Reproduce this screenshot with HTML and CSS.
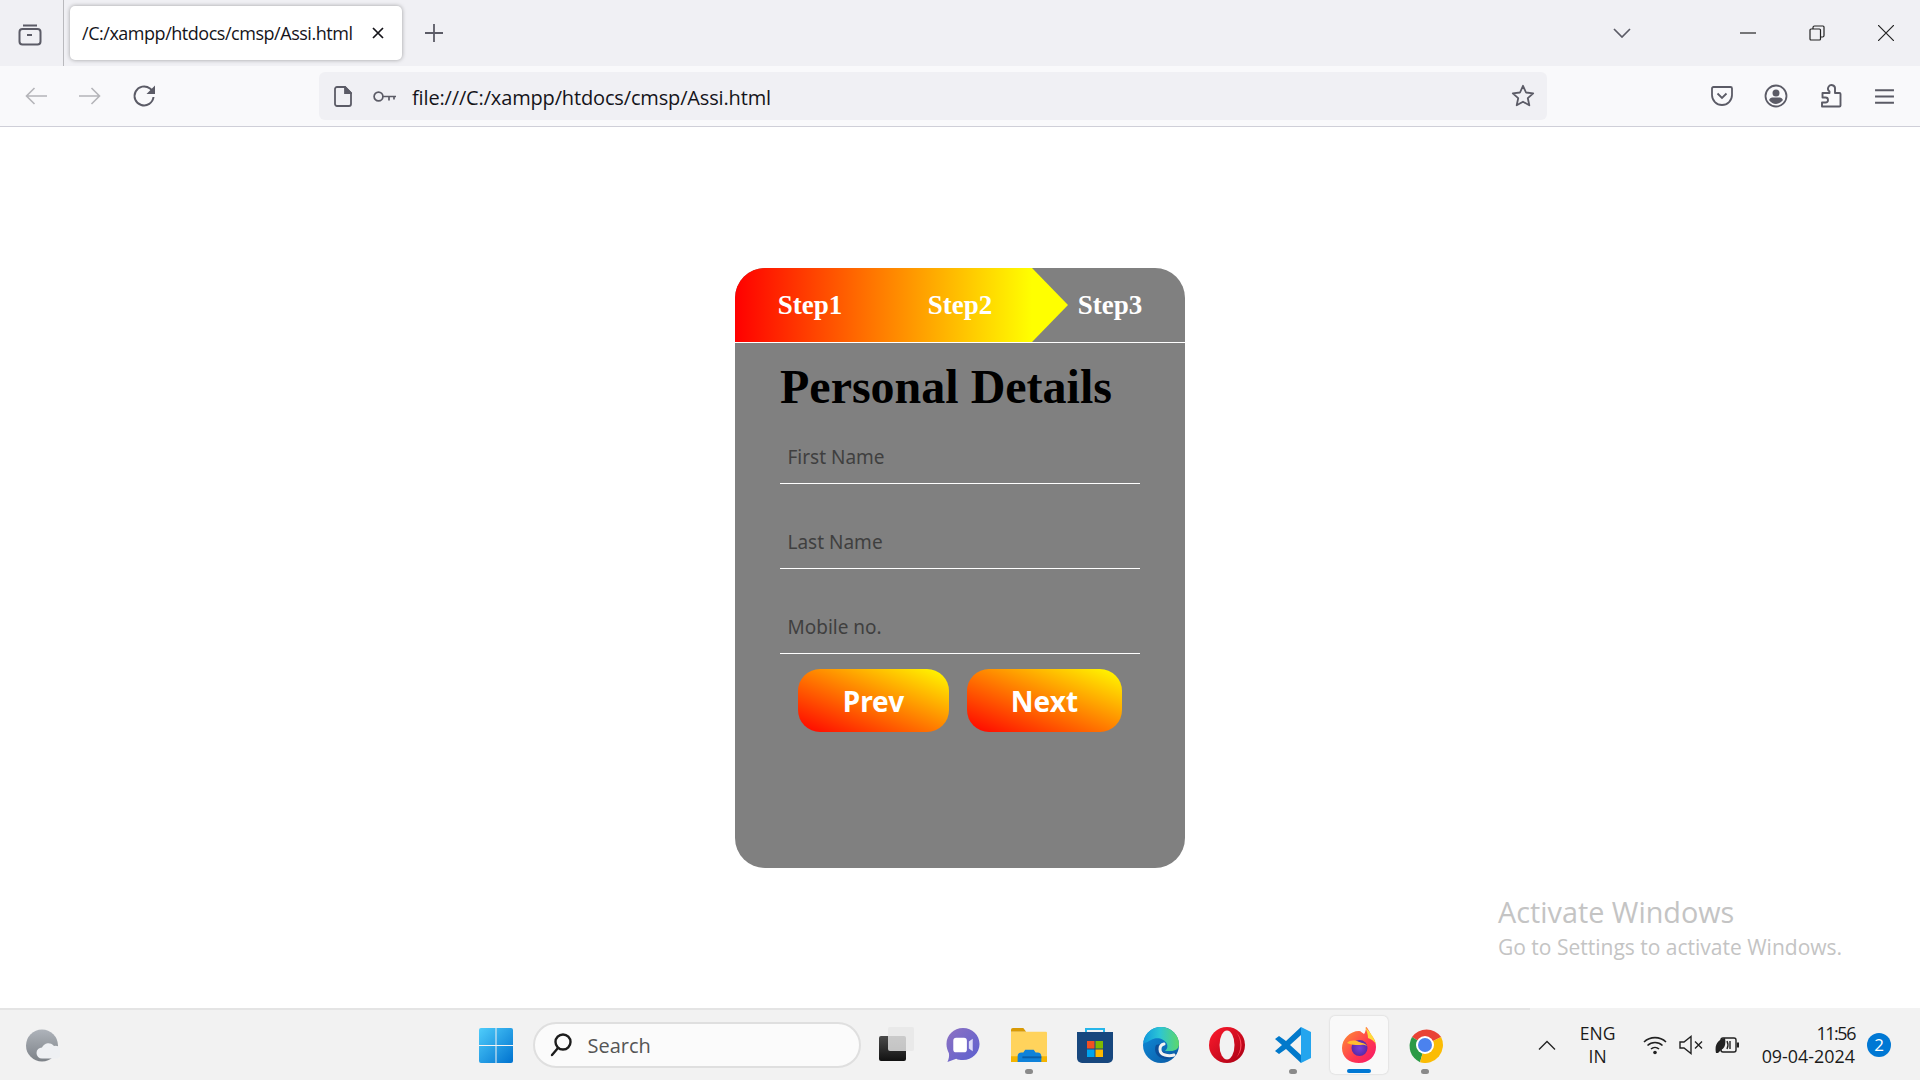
FILE: index.html
```html
<!DOCTYPE html>
<html lang="en">
<head>
<meta charset="utf-8">
<title>Assi.html</title>
<link rel="stylesheet" href="styles.css">
</head>
<body>
<header class="tabbar">
  <div class="tabbar-start">
    <svg class="ico24" viewBox="0 0 24 24" fill="none" stroke="#5b5b66" stroke-width="2"><path d="M5 3.500h14"/><rect x="1.500" y="7" width="21" height="15.500" rx="3"/><path d="M9 13h5"/></svg>
  </div>
  <div class="tab">
    <span class="tab-title">/C:/xampp/htdocs/cmsp/Assi.html</span>
    <svg class="ico14" viewBox="0 0 14 14" stroke="#15141a" stroke-width="1.700"><path d="M2 2l10 10M12 2L2 12"/></svg>
  </div>
  <svg class="newtab" viewBox="0 0 18 18" stroke="#5b5b66" stroke-width="1.800"><path d="M9 0v18M0 9h18"/></svg>
  <div class="tabbar-spacer"></div>
  <svg class="chev" viewBox="0 0 18 10" fill="none" stroke="#5b5b66" stroke-width="1.700"><path d="M1 1l8 8 8-8"/></svg>
  <div class="winctl">
    <svg class="winbtn" viewBox="0 0 16 16" stroke="#222" stroke-width="1.200"><path d="M0 8h16"/></svg>
    <svg class="winbtn" viewBox="0 0 16 16" fill="none" stroke="#222" stroke-width="1.200"><rect x="1" y="4" width="10.500" height="11" rx="1"/><path d="M4 4V2.500Q4 1 5.500 1H14q1 0 1 1v8.500q0 1.500-1.500 1.500h-2"/></svg>
    <svg class="winbtn" viewBox="0 0 16 16" stroke="#222" stroke-width="1.200"><path d="M0 0l16 16M16 0L0 16"/></svg>
  </div>
</header>

<nav class="toolbar">
  <div class="navbtns">
    <svg class="ico22" viewBox="0 0 22 18" fill="none" stroke="#b4b4b9" stroke-width="1.600"><path d="M22 9H1.500M9.500 1L1.500 9l8 8"/></svg>
    <svg class="ico22" viewBox="0 0 22 18" fill="none" stroke="#b4b4b9" stroke-width="1.600"><path d="M0 9h20.500M12.500 1l8 8-8 8"/></svg>
    <svg class="reload" viewBox="0 0 24 24" fill="none" stroke="#5b5b66" stroke-width="2"><path d="M21.500 13a9.500 9.500 0 1 1-3.500-8.500L22 8"/><path d="M23 1.500v8.500h-8.500z" fill="#5b5b66" stroke="none"/></svg>
  </div>
  <div class="urlbar">
    <svg class="doc" viewBox="0 0 18 21" fill="none" stroke="#5b5b66" stroke-width="1.800"><path d="M3 1h8l6 6v11a2 2 0 0 1-2 2H3a2 2 0 0 1-2-2V3a2 2 0 0 1 2-2z"/><path d="M11 1v6h6z" fill="#5b5b66"/></svg>
    <svg class="key" viewBox="0 0 24 11" fill="none" stroke="#5b5b66" stroke-width="1.700"><circle cx="5.500" cy="5.500" r="4.400"/><path d="M10 5.500h13M16 5.500v4M21 5.500v3"/></svg>
    <span class="url">file:///C:/xampp/htdocs/cmsp/Assi.html</span>
    <svg class="star" viewBox="0 0 24 24" fill="none" stroke="#5b5b66" stroke-width="1.800" stroke-linejoin="round"><path d="M12 1.800l3 6.700 7.200.8-5.400 4.900 1.500 7.100-6.300-3.600-6.300 3.600 1.500-7.100L1.800 9.300 9 8.500z"/></svg>
  </div>
  <div class="toolicons">
    <svg class="ico22" viewBox="0 0 22 20" fill="none" stroke="#5b5b66" stroke-width="1.800"><path d="M2.500 1h17A1.500 1.500 0 0 1 21 2.500V9a10 10 0 0 1-20 0V2.500A1.500 1.500 0 0 1 2.500 1z"/><path d="M6.500 7.500l4.500 4.500 4.500-4.500"/></svg>
    <svg class="big" viewBox="0 0 24 24" fill="none" stroke="#5b5b66" stroke-width="1.800"><circle cx="12" cy="12" r="10.500"/><circle cx="12" cy="9" r="3.500" fill="#5b5b66" stroke="none"/><path d="M5 16q1-2.500 3-2.500h8q2 0 3 2.500q-3 4-7 4t-7-4z" fill="#5b5b66" stroke="none"/></svg>
    <svg class="big" viewBox="0 0 24 24" fill="none" stroke="#5b5b66" stroke-width="1.900" stroke-linejoin="round"><path d="M3 22.500h17.500a1 1 0 0 0 1-1V10a1 1 0 0 0-1-1H16V5a3.500 3.500 0 1 0-5.500 2.500V9H3.500v4.500h3a2.500 2.500 0 1 1 0 5h-3.500z"/></svg>
    <svg class="menu" viewBox="0 0 20 16" stroke="#5b5b66" stroke-width="1.800"><path d="M1 2h18M1 8h18M1 14h18"/></svg>
  </div>
</nav>

<main class="page">
  <section class="card">
    <div class="steps">
      <div class="step-progress"></div>
      <span class="step">Step1</span>
      <span class="step">Step2</span>
      <span class="step">Step3</span>
    </div>
    <form class="form">
      <h1 class="title">Personal Details</h1>
      <input class="field" type="text" placeholder="First Name">
      <input class="field" type="text" placeholder="Last Name">
      <input class="field" type="text" placeholder="Mobile no.">
      <div class="actions">
        <button class="btn btn-prev" type="button">Prev</button>
        <button class="btn btn-next" type="button">Next</button>
      </div>
    </form>
  </section>
  <aside class="watermark">
    <div class="wm-big">Activate Windows</div>
    <div class="wm-small">Go to Settings to activate Windows.</div>
  </aside>
</main>

<footer class="taskbar">
  <div class="task-edge"></div>
  <div class="task-row">
    <div class="task-left">
      <svg class="ico34" viewBox="0 0 34 34"><defs><linearGradient id="moon" x1="0" y1="0" x2="0" y2="1"><stop offset="0" stop-color="#aeb3ba"/><stop offset="1" stop-color="#7d8288"/></linearGradient></defs><ellipse cx="16" cy="17" rx="16" ry="16" fill="url(#moon)"/><path d="M16 30a5.500 5.500 0 0 1 0-11 7 7 0 0 1 12-1.500 6 6 0 0 1 3 12.500z" fill="#eef0f3"/></svg>
    </div>
    <div class="task-center">
      <div class="slot slot-start">
        <svg class="ico34" viewBox="0 0 34 35"><defs><linearGradient id="win" x1="0" y1="0" x2="1" y2="1"><stop offset="0" stop-color="#4fcdfb"/><stop offset="1" stop-color="#0072cf"/></linearGradient></defs><path fill="url(#win)" d="M0 2a2 2 0 0 1 2-2h14.500v17H0zM17.500 0H32a2 2 0 0 1 2 2v15H17.500zM0 18h16.500v17H2a2 2 0 0 1-2-2zM17.500 18H34v15a2 2 0 0 1-2 2H17.500z"/></svg>
      </div>
      <div class="search">
        <svg class="search-ico" viewBox="0 0 22 24" fill="none" stroke="#1c1c1c" stroke-width="2.400"><circle cx="13" cy="9" r="7.500"/><path d="M8 15l-6 7" stroke-linecap="round"/></svg>
        <span class="search-text">Search</span>
      </div>
      <div class="slot slot-task">
        <svg class="ico36" viewBox="0 0 36 36"><defs><linearGradient id="tv" x1="0" y1="0" x2="0" y2="1"><stop offset="0" stop-color="#4a4a4a"/><stop offset="1" stop-color="#111"/></linearGradient></defs><rect x="0" y="9" width="27" height="25" rx="2" fill="url(#tv)"/><rect x="9" y="0" width="26" height="24" rx="2" fill="#e6e6e6" fill-opacity=".82"/></svg>
      </div>
      <div class="slot">
        <svg class="ico34" viewBox="0 0 34 36"><defs><linearGradient id="chat" x1="0" y1="0" x2="1" y2="1"><stop offset="0" stop-color="#8e72c2"/><stop offset="1" stop-color="#5a5fd0"/></linearGradient></defs><path fill="url(#chat)" d="M17 0c9.500 0 17 7.500 17 16.500S26.500 33 17 33c-3 0-5-.5-7-1.500L1 35c1.500-3 2-6 1.500-9C1 23 0 20 0 16.500 0 7.500 7.500 0 17 0z"/><rect x="7" y="10" width="14" height="15" rx="3" fill="#fff"/><path d="M23 14l4-3v13l-4-3z" fill="#dcdcf7"/></svg>
      </div>
      <div class="slot dot">
        <svg class="ico36" viewBox="0 0 38 36"><path d="M0 2a2 2 0 0 1 2-2h11l3 4h-16z" fill="#d99a05"/><path d="M0 4h37a1 1 0 0 1 1 1v31H0z" fill="#ffd35c"/><path d="M38 30v6H0v-6z" fill="#f4b400"/><path d="M7 36V30a4 4 0 0 1 4-4h2l2-3h9l2 3h2a4 4 0 0 1 4 4v6z" fill="#0f82da"/><rect x="12" y="30" width="20" height="2" fill="#0a5ea8"/></svg>
      </div>
      <div class="slot">
        <svg class="ico36" viewBox="0 0 36 36"><path d="M9 7V2h18v5" fill="none" stroke="#27b6ea" stroke-width="2"/><path d="M0 5h36v26a5 5 0 0 1-5 5H5a5 5 0 0 1-5-5z" fill="#17477e"/><rect x="10" y="14" width="7.500" height="7.500" fill="#f25022"/><rect x="18.500" y="14" width="7.500" height="7.500" fill="#7fba00"/><rect x="10" y="22.500" width="7.500" height="7.500" fill="#00a4ef"/><rect x="18.500" y="22.500" width="7.500" height="7.500" fill="#ffb900"/></svg>
      </div>
      <div class="slot">
        <svg class="ico36" viewBox="0 0 36 36"><defs><linearGradient id="edgeA" x1="0" y1="0" x2="1" y2="0"><stop offset="0" stop-color="#1099dd"/><stop offset=".45" stop-color="#2cc5d5"/><stop offset="1" stop-color="#5dd76a"/></linearGradient><linearGradient id="edgeB" x1="0" y1="0" x2="1" y2="1"><stop offset="0" stop-color="#0f8fdc"/><stop offset="1" stop-color="#0a57a2"/></linearGradient></defs><circle cx="18" cy="18" r="18" fill="url(#edgeB)"/><path d="M.5 15C2 6 9 0 18 0c10 0 18 8 18 17 0 5-4 7-8 7h-6c2-2 3-4 2-7-3-6-11-7-16-4-4 2-6 4-7.500 2z" fill="url(#edgeA)"/><path d="M13 18c-3 6 1 13 9 14 4 1 9-2 12-6-4 2-8 2-11 0-5-2-8-5-6-9z" fill="#0c4f9a"/><path d="M21 17c-5 1-6 9 1 11 3 1 6 1 9 0" fill="none" stroke="#f2f2f2" stroke-width="3" stroke-linecap="round"/></svg>
      </div>
      <div class="slot">
        <svg class="ico36" viewBox="0 0 36 36"><defs><linearGradient id="op" x1="0" y1="0" x2="1" y2="1"><stop offset="0" stop-color="#ff1b2d"/><stop offset="1" stop-color="#a70014"/></linearGradient></defs><ellipse cx="18" cy="18" rx="18" ry="18" fill="url(#op)"/><ellipse cx="18" cy="18" rx="7.500" ry="14.500" fill="#f2f2f2"/><path d="M27 5a18 18 0 0 1 0 26 14 18 0 0 0 0-26z" fill="#ff4b5b"/></svg>
      </div>
      <div class="slot dot">
        <svg class="ico36" viewBox="0 0 36 36"><path d="M26 0l10 5v26l-10 5z" fill="#24a5ee"/><path d="M26 0L11 14 4 9 0 12l7 6-7 6 4 3 7-5 15 14v-8L15 18 26 8z" fill="#0179cb"/></svg>
      </div>
      <div class="slot slot-active">
        <svg class="ico36" viewBox="0 0 36 36"><defs><linearGradient id="ff" x1="0" y1="0" x2="1" y2="1"><stop offset="0" stop-color="#ff9a2f"/><stop offset=".6" stop-color="#ff3750"/><stop offset="1" stop-color="#f5156c"/></linearGradient><radialGradient id="ffg"><stop offset="0" stop-color="#7a3fd6"/><stop offset="1" stop-color="#5a2aa8"/></radialGradient></defs><path d="M18 4C9 4 1 12 1 21s7 15 17 15 17-7 17-16c0-5-2-9-5-12-1-3-4-8-5-8 0 3-1 6-2 7-2-1-3-3-5-3z" fill="url(#ff)"/><path d="M24 0c3 3 9 9 11 17-2-3-5-5-8-6 0-3-1-7-3-11z" fill="#ffd93b"/><circle cx="18.500" cy="21" r="8" fill="url(#ffg)"/><path d="M6 16c3-3 8-3 12-1 3 1 6 1 8 4-3-2-6-1-9-1-3 0-6 0-11-2z" fill="#ffbd2f"/></svg>
        <span class="active-bar"></span>
      </div>
      <div class="slot dot">
        <svg class="ico36" viewBox="0 0 36 36"><path d="M18 18L5 10A18 18 0 0 1 34.100 10z" fill="#e94235"/><path d="M18 18L5 10a18 18 0 0 0 8 25.300z" fill="#2b9a46"/><path d="M18 18l16.100-8A18 18 0 0 1 13 35.300z" fill="#fbbc05"/><circle cx="18" cy="18" r="9" fill="#fff"/><circle cx="18" cy="18" r="7" fill="#4b82ee"/></svg>
      </div>
    </div>
    <div class="task-right">
      <svg class="tray-chev" viewBox="0 0 18 10" fill="none" stroke="#222" stroke-width="1.300"><path d="M1 9.500l8-8 8 8"/></svg>
      <div class="lang"><span>ENG</span><span>IN</span></div>
      <div class="tray">
        <svg class="tray-ico" viewBox="0 0 24 20" fill="none" stroke="#222" stroke-width="1.600"><path d="M1 7a16 16 0 0 1 22 0M4.500 10.500a11 11 0 0 1 15 0M8 14a6 6 0 0 1 8 0"/><circle cx="12" cy="17.500" r="1.800" fill="#222" stroke="none"/></svg>
        <svg class="tray-ico" viewBox="0 0 24 20" fill="none" stroke="#222" stroke-width="1.400"><path d="M1 7h4l7-5.500v17L5 13H1z"/><path d="M16 6.500l7 7M23 6.500l-7 7"/></svg>
        <svg class="tray-ico" viewBox="0 0 24 20" fill="none" stroke="#222" stroke-width="1.400"><rect x="6" y="3" width="15" height="14" rx="2"/><path d="M23 7.500v5" stroke-width="2.400"/><path d="M1 18C-1 9 4 4 10 3c1 6 0 10-4 12l-3 3z" fill="#222" stroke="none"/><path d="M12 6q2 4 0 8M15 6v8"/></svg>
      </div>
      <div class="clock"><span class="time">11:56</span><span>09-04-2024</span></div>
      <span class="badge">2</span>
    </div>
  </div>
</footer>
</body>
</html>
```
FILE: styles.css
```css
* { box-sizing: border-box; }
html, body { margin: 0; height: 100%; }
body {
  display: flex;
  flex-direction: column;
  height: 100vh;
  overflow: hidden;
  background: #fff;
  font-family: "Open Sans", "Noto Sans", sans-serif;
  color: #15141a;
}
svg { display: block; flex: none; }

/* Browser tab strip */
.tabbar {
  height: 66px;
  flex: none;
  display: flex;
  align-items: center;
  background: #f0f0f4;
}
.tabbar-start {
  width: 64px;
  height: 66px;
  padding: 22px 0 0 18px;
  border-right: 1px solid #b9b9bd;
}
.ico24 { width: 24px; height: 24px; }
.tab {
  width: 332px;
  height: 54px;
  margin-left: 6px;
  padding: 0 17px 0 12px;
  display: flex;
  align-items: center;
  justify-content: space-between;
  background: #fff;
  border-radius: 5px;
  box-shadow: 0 0 4px rgba(0, 0, 0, .35);
}
.tab-title { font-size: 18px; letter-spacing: -.47px; white-space: nowrap; }
.ico14 { width: 14px; height: 14px; }
.newtab { width: 18px; height: 18px; margin-left: 23px; }
.tabbar-spacer { flex: 1; }
.chev { width: 18px; height: 10px; margin-right: 109px; }
.winctl { display: flex; gap: 53px; padding-right: 26px; }
.winbtn { width: 16px; height: 16px; }

/* Browser toolbar */
.toolbar {
  height: 61px;
  flex: none;
  display: flex;
  align-items: center;
  background: #f9f9fb;
  border-bottom: 1px solid #cfcfd8;
}
.navbtns { display: flex; gap: 32px; padding-left: 25px; width: 319px; align-items: center; }
.ico22 { width: 22px; height: 20px; }
.reload { width: 24px; height: 24px; margin-left: -1px; }
.big { height: 24px; width: 24px; }
.menu { width: 21px; height: 17px; }
.urlbar {
  width: 1228px;
  height: 48px;
  display: flex;
  align-items: center;
  padding: 0 12px 0 15px;
  background: #f0f0f4;
  border-radius: 6px;
}
.doc { width: 18px; height: 21px; }
.key { width: 24px; height: 11px; margin-left: 21px; }
.url { flex: 1; font-size: 20px; letter-spacing: -.15px; margin: 2px 0 0 15px; white-space: nowrap; }
.star { width: 24px; height: 24px; }
.toolicons {
  flex: 1;
  display: flex;
  align-items: center;
  justify-content: space-between;
  padding: 0 25px 0 164px;
}

/* Page */
.page {
  flex: 1;
  display: flex;
  justify-content: center;
  padding-top: 141px;
  position: relative;
}
.card {
  width: 450px;
  height: 600px;
  background: #808080;
  border-radius: 30px;
  overflow: hidden;
}
.steps {
  position: relative;
  height: 75px;
  display: flex;
  border-bottom: 1px solid #fff;
}
.step-progress {
  position: absolute;
  left: 0;
  top: 0;
  width: 333px;
  height: 74px;
  background: linear-gradient(to right, #f00, #ff0 297px);
  clip-path: polygon(0 0, 297px 0, 333px 50%, 297px 100%, 0 100%);
}
.step {
  position: relative;
  flex: 1;
  text-align: center;
  align-self: center;
  font-family: "Liberation Serif", serif;
  font-weight: 700;
  font-size: 27px;
  color: #fff;
}
.form {
  display: flex;
  flex-direction: column;
  padding: 16px 45px 0;
}
.title {
  margin: 0 0 17px;
  font-family: "Liberation Serif", serif;
  font-weight: 700;
  font-size: 48px;
  line-height: 55px;
  color: #000;
}
.field {
  height: 53px;
  margin-bottom: 32px;
  padding: 0 7.500px;
  border: 0;
  border-bottom: 1px solid #fff;
  outline: 0;
  background: transparent;
  font-family: "Noto Sans", sans-serif;
  font-size: 19px;
  color: #000;
}
.field::placeholder { color: #3f3f3f; opacity: 1; }
.actions {
  display: flex;
  gap: 18px;
  padding-left: 18px;
  margin-top: -17px;
}
.btn {
  height: 63px;
  border: 0;
  border-radius: 22px;
  background: linear-gradient(to top right, #f00, #ff0);
  font-family: "Noto Sans", sans-serif;
  font-weight: 700;
  font-size: 28px;
  color: #fff;
}
.btn-prev { width: 151px; }
.btn-next { width: 155px; }

.watermark {
  position: absolute;
  left: 1498px;
  top: 764px;
  color: #c4c4c4;
  white-space: nowrap;
}
.wm-big { font-size: 28.800px; line-height: 42px; }
.wm-small { font-size: 21px; line-height: 28px; }

/* Taskbar */
.taskbar {
  height: 72px;
  flex: none;
  background: #f2f2f2;
}
.task-edge { width: 1530px; height: 2px; background: #e4e4e4; }
.task-row {
  height: 70px;
  display: grid;
  grid-template-columns: 1fr auto 1fr;
  align-items: center;
}
.task-left { padding-left: 26px; }
.ico34 { width: 34px; height: 35px; }
.ico36 { width: 36px; height: 36px; }
.task-center { display: flex; align-items: center; height: 70px; margin-left: 17px; }
.slot {
  position: relative;
  width: 66px;
  height: 58px;
  display: flex;
  align-items: center;
  justify-content: center;
}
.slot-start { width: 72px; margin-left: -20px; margin-right: 1px; }
.slot-task { margin-right: 2px; padding-left: 5px; }
.dot::after {
  content: "";
  position: absolute;
  left: 50%;
  bottom: 0;
  width: 8px;
  height: 5px;
  margin-left: -4px;
  border-radius: 3px;
  background: #8a8a8a;
}
.slot-active {
  width: 58px;
  margin: 0 4px;
  background: #f9f9f9;
  border-radius: 5px;
  box-shadow: 0 0 2px rgba(0, 0, 0, .18);
}
.active-bar {
  position: absolute;
  left: 50%;
  bottom: 1px;
  width: 24px;
  height: 4px;
  margin-left: -12px;
  border-radius: 2px;
  background: #0078d4;
}
.search {
  width: 328px;
  height: 46px;
  display: flex;
  align-items: center;
  margin-right: 1px;
  padding-left: 15px;
  background: #fbfbfb;
  border: 2px solid #dfdfdf;
  border-radius: 23px;
}
.search-ico { width: 22px; height: 24px; }
.search-text { margin-left: 16px; font-size: 20px; color: #555; }
.task-right {
  display: flex;
  align-items: center;
  justify-content: flex-end;
  padding-right: 29px;
}
.tray-chev { width: 18px; height: 10px; margin-right: 22px; }
.lang, .clock {
  display: flex;
  flex-direction: column;
  font-size: 17.500px;
  line-height: 23px;
  color: #1a1a1a;
}
.lang { align-items: center; width: 40px; }
.tray { display: flex; gap: 12px; margin-left: 25px; margin-right: 23px; }
.tray-ico { width: 24px; height: 20px; }
.clock { align-items: flex-end; font-size: 17.900px; }
.time { letter-spacing: -1.400px; }
.badge {
  width: 24px;
  height: 24px;
  margin-left: 12px;
  border-radius: 50%;
  background: #0078d4;
  color: #fff;
  font-size: 17px;
  line-height: 24px;
  text-align: center;
}
```
